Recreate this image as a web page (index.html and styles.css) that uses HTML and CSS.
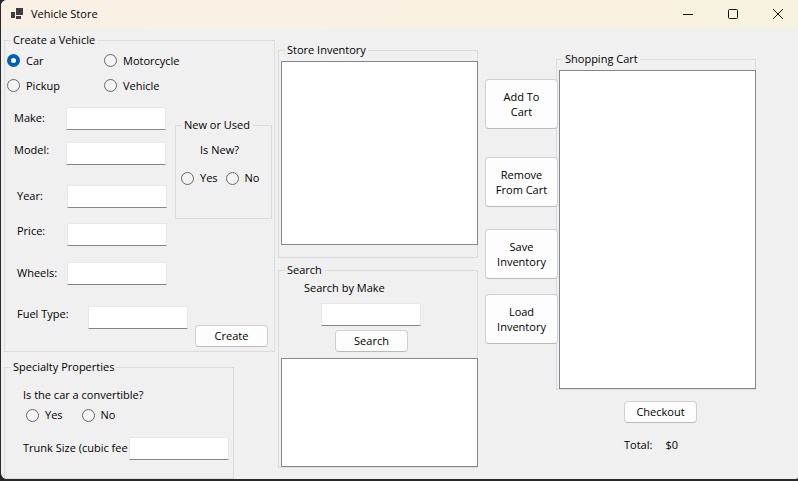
FILE: index.html
```html
<!DOCTYPE html>
<html lang="en">
<head>
<meta charset="utf-8">
<title>Vehicle Store</title>
<link rel="stylesheet" href="styles.css">
</head>
<body>
<div class="window">
  <header class="titlebar">
    <svg class="app-icon" width="13" height="12" viewBox="0 0 13 12" aria-hidden="true" shape-rendering="crispEdges">
      <path fill="#3d3d3d" d="M5 0h7v7H5zM0 4h4v6H0zM5 8h5v3H5z"/>
    </svg>
    <h1>Vehicle Store</h1>
    <div class="window-controls">
      <button type="button" aria-label="Minimize"><svg width="12" height="12" viewBox="0 0 12 12"><path d="M1 6.500h10"/></svg></button>
      <button type="button" aria-label="Maximize"><svg width="12" height="12" viewBox="0 0 12 12"><rect x="1.500" y="1.500" width="9" height="9" rx="1"/></svg></button>
      <button type="button" aria-label="Close"><svg width="12" height="12" viewBox="0 0 12 12"><path d="M1 1l10 10M11 1L1 11"/></svg></button>
    </div>
  </header>

  <main class="content">
    <div class="col-vehicle">
      <fieldset class="create">
        <legend>Create a Vehicle</legend>
        <div class="types">
          <label><input type="radio" name="type" checked>Car</label>
          <label><input type="radio" name="type">Motorcycle</label>
          <label><input type="radio" name="type">Pickup</label>
          <label><input type="radio" name="type">Vehicle</label>
        </div>
        <div class="details">
          <div class="fields">
            <div class="names">
              <label for="make">Make:</label><input type="text" id="make">
              <label class="raised" for="model">Model:</label><input type="text" id="model">
            </div>
            <div class="specs">
              <label for="year">Year:</label><input type="text" id="year">
              <label class="raised" for="price">Price:</label><input type="text" id="price">
              <label for="wheels">Wheels:</label><input type="text" id="wheels">
            </div>
          </div>
          <fieldset class="condition">
            <legend>New or Used</legend>
            <p>Is New?</p>
            <div class="choices">
              <label><input type="radio" name="new">Yes</label>
              <label><input type="radio" name="new">No</label>
            </div>
          </fieldset>
        </div>
        <div class="fuel">
          <label for="fuel">Fuel Type:</label><input type="text" id="fuel">
          <button type="button" class="btn">Create</button>
        </div>
      </fieldset>

      <fieldset class="specialty">
        <legend>Specialty Properties</legend>
        <p>Is the car a convertible?</p>
        <div class="choices">
          <label><input type="radio" name="convertible">Yes</label>
          <label><input type="radio" name="convertible">No</label>
        </div>
        <div class="trunk">
          <label for="trunk">Trunk Size (cubic fee</label><input type="text" id="trunk">
        </div>
      </fieldset>
    </div>

    <div class="col-store">
      <fieldset class="inventory">
        <legend>Store Inventory</legend>
        <select class="list" size="10" aria-label="Store Inventory"></select>
      </fieldset>
      <fieldset class="search">
        <legend>Search</legend>
        <label for="query">Search by Make</label>
        <input type="text" id="query">
        <button type="button" class="btn">Search</button>
        <select class="list" size="6" aria-label="Search results"></select>
      </fieldset>
    </div>

    <div class="col-actions">
      <button type="button" class="btn tall">Add To Cart</button>
      <button type="button" class="btn tall">Remove From Cart</button>
      <button type="button" class="btn tall">Save Inventory</button>
      <button type="button" class="btn tall">Load Inventory</button>
    </div>

    <div class="col-cart">
      <fieldset class="cart">
        <legend>Shopping Cart</legend>
        <select class="list" size="18" aria-label="Shopping Cart"></select>
      </fieldset>
      <div class="checkout">
        <button type="button" class="btn">Checkout</button>
        <p><span>Total:</span><output>$0</output></p>
      </div>
    </div>
  </main>
</div>
</body>
</html>
```
FILE: styles.css
```css
* { box-sizing: border-box; }

body {
  margin: 0;
  background: #29292d;
  color: #000;
  font: 11px/16px "Open Sans", "Noto Sans", sans-serif;
}

input, button, select { font: inherit; color: inherit; margin: 0; }
p { margin: 0; }

.window {
  display: flex;
  flex-direction: column;
  min-height: calc(100vh - 2px);
  margin: 0 0 2px 1px;
  background: #f0f0f0;
  border-radius: 6px 0 2px 6px;
  overflow: hidden;
}

/* Title bar */
.titlebar {
  display: flex;
  align-items: center;
  height: 29px;
  padding: 0 0 2px 10px;
  background: linear-gradient(90deg, #faf1e6, #f8f2e0);
}
.titlebar h1 { margin: 0 0 0 7px; font-size: 11px; font-weight: 400; }
.window-controls { display: flex; margin: 0 -2px 0 auto; }
.window-controls button {
  display: flex;
  align-items: center;
  justify-content: center;
  width: 45px;
  height: 27px;
  padding: 0;
  border: 0;
  background: none;
}
.window-controls svg { fill: none; stroke: #111; stroke-width: 1; }

/* Columns */
.content {
  display: flex;
  flex: 1;
  padding: 0 42px 0 3px;
}
.col-vehicle {
  display: flex;
  flex-direction: column;
  gap: 7px;
  flex: 271 1 0;
  min-width: 0;
  padding-top: 3px;
}
.col-store {
  display: flex;
  flex-direction: column;
  gap: 4px;
  flex: 200 1 0;
  min-width: 0;
  margin-left: 3px;
  padding-top: 13px;
}
.col-actions {
  display: grid;
  grid-template-rows: 78px 72px 65px 50px;
  width: 73px;
  margin: 50px -2px 0 7px;
  align-content: start;
  z-index: 1;
}
.col-cart { flex: 200 1 0; min-width: 0; padding-top: 22px; }

/* Controls */
fieldset {
  min-width: 0;
  margin: 0;
  padding: 0;
  border: 1px solid #dcdcdc;
}
legend { margin-left: 6px; padding: 0 2px; }

input[type="text"] {
  width: 100px;
  height: 23px;
  padding: 0 4px;
  border: 1px solid #e8e8e8;
  border-bottom-color: #868686;
  border-radius: 1px;
  background: #fff;
}
input[type="radio"] {
  appearance: none;
  flex: none;
  width: 13px;
  height: 13px;
  margin-right: 6px;
  border: 1px solid #666;
  border-radius: 50%;
  background: #f4f4f4;
}
input[type="radio"]:checked { border: 4px solid #005fb8; background: #fff; }
label { white-space: nowrap; }
.types label, .choices label { display: flex; align-items: center; }

.btn {
  width: 73px;
  height: 22px;
  padding: 0;
  border: 1px solid #d0d0d0;
  border-bottom-color: #bababa;
  border-radius: 4px;
  background: #fdfdfd;
}
.btn.tall { height: 50px; padding: 0 8px; line-height: 15px; }

.list {
  appearance: none;
  display: block;
  width: calc(100% - 1px);
  margin-left: 2px;
  padding: 0;
  border: 1px solid #828790;
  border-radius: 0;
  background: #fff;
}

/* Create a Vehicle */
.create { padding-bottom: 4px; }
.types {
  display: grid;
  grid-template-columns: 97px 1fr;
  grid-auto-rows: 25px;
  padding-left: 2px;
}
.details {
  display: flex;
  justify-content: space-between;
  padding: 9px 2px 0 0;
}
.names, .specs { display: grid; align-items: start; }
.names {
  grid-template-columns: 52px 100px;
  grid-template-rows: 35px 43px;
  padding-left: 9px;
}
.specs {
  grid-template-columns: 50px 100px;
  grid-template-rows: 38px 39px 44px;
  padding-left: 12px;
}
.names label, .specs label { line-height: 22px; }
.names .raised, .specs .raised { line-height: 16px; }
.condition { width: 97px; height: 102px; margin-top: 10px; }
.condition p { margin-top: 9px; padding-left: 24px; }
.condition .choices { display: flex; gap: 8px; padding: 12px 0 0 5px; }
.fuel { display: flex; height: 41px; padding: 0 6px 0 12px; }
.fuel label { width: 71px; }
.fuel .btn { margin-left: auto; align-self: flex-end; }

/* Specialty Properties */
.specialty { flex: 1; width: 85%; }
.specialty p { padding: 12px 0 0 18px; }
.specialty .choices { display: flex; gap: 19px; padding: 4px 0 0 21px; }
.trunk { display: flex; padding: 14px 0 18px 18px; }
.trunk label { width: 106px; line-height: 22px; }

/* Store */
.inventory { padding: 3px 0 12px; }
.inventory .list { height: 184px; }
.search {
  display: flex;
  flex-direction: column;
}
.search label { padding: 2px 0 0 25px; }
.search input { margin: 7px 0 4px 42px; }
.search .btn { margin: 0 0 6px 56px; }
.search .list { height: 109px; }

/* Cart */
.cart { padding-top: 3px; }
.cart .list { height: 319px; }
.checkout { padding: 11px 0 0 68px; }
.checkout p { display: flex; gap: 13px; padding-top: 14px; }
```
